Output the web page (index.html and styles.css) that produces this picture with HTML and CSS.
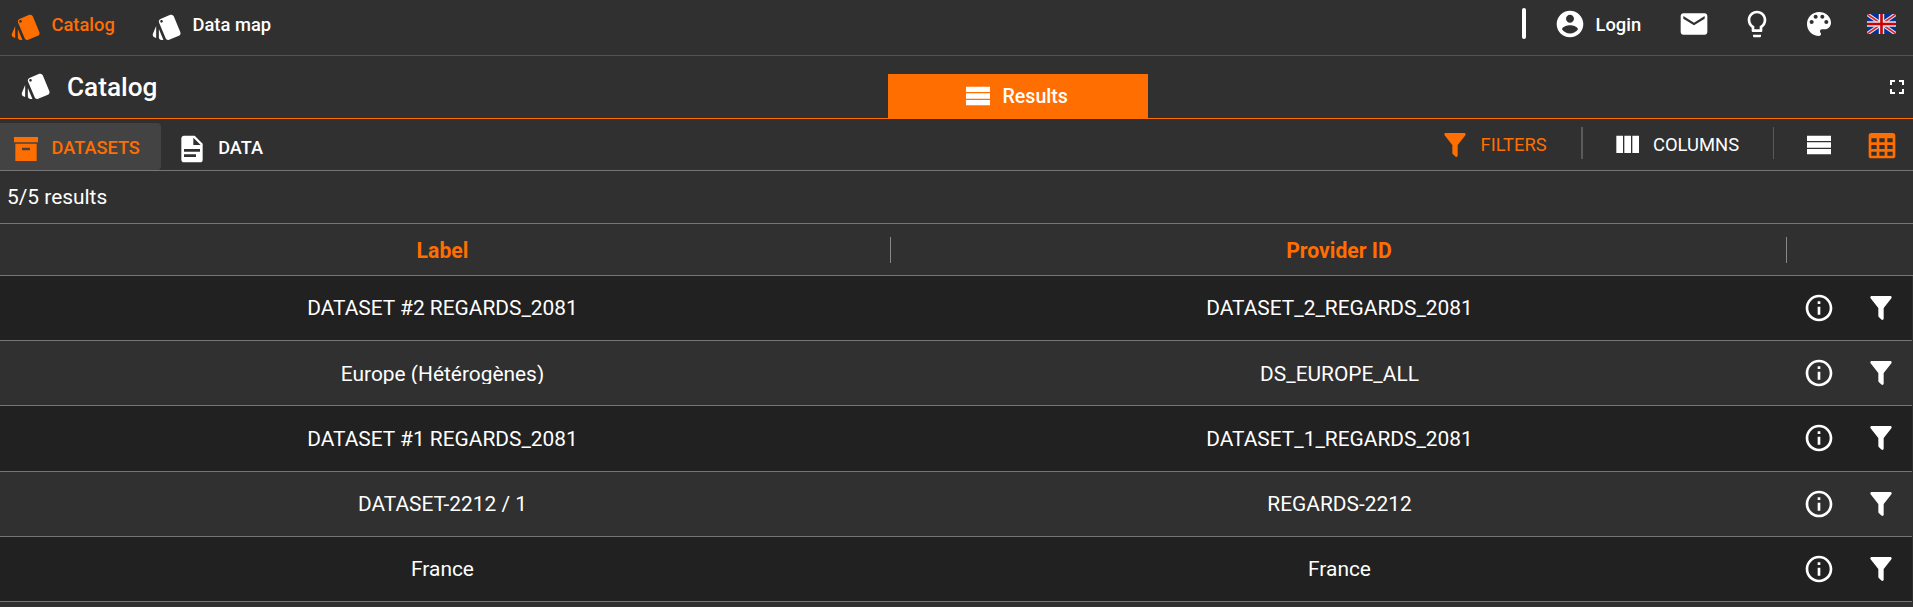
FILE: index.html
```html
<!DOCTYPE html>
<html lang="en">
<head>
<meta charset="utf-8">
<title>Catalog</title>
<link rel="stylesheet" href="styles.css">
</head>
<body>
<svg class="defs" width="0" height="0">
  <symbol id="cards" viewBox="0 0 24 24"><path d="M2.53 19.65l1.34.56v-9.03l-2.43 5.86c-.41 1.02.08 2.19 1.09 2.61zm19.5-3.7L17.07 3.98c-.31-.75-1.04-1.21-1.81-1.23-.26 0-.53.04-.79.15L7.1 5.95c-.75.31-1.21 1.03-1.23 1.8-.01.27.04.54.15.8l4.96 11.97c.31.76 1.05 1.22 1.83 1.23.26 0 .52-.05.77-.15l7.36-3.05c1.02-.42 1.51-1.59 1.09-2.6zM7.88 8.75c-.55 0-1-.45-1-1s.45-1 1-1 1 .45 1 1-.45 1-1 1zm-2 11c0 1.1.9 2 2 2h1.45l-3.45-8.34v6.34z"/></symbol>
  <symbol id="filter" viewBox="0 0 24 24"><path d="M14,12V19.88C14.04,20.18 13.94,20.5 13.71,20.71C13.32,21.1 12.69,21.1 12.3,20.71L10.29,18.7C10.06,18.47 9.96,18.16 10,17.87V12H9.97L4.21,4.62C3.87,4.19 3.95,3.56 4.38,3.22C4.57,3.08 4.78,3 5,3H19C19.22,3 19.43,3.08 19.62,3.22C20.05,3.56 20.13,4.19 19.79,4.62L14.03,12H14Z"/></symbol>
  <symbol id="info" viewBox="0 0 24 24"><path d="M11 17h2v-6h-2v6zm1-15C6.48 2 2 6.48 2 12s4.48 10 10 10 10-4.48 10-10S17.52 2 12 2zm0 18c-4.41 0-8-3.59-8-8s3.59-8 8-8 8 3.59 8 8-3.59 8-8 8zM11 9h2V7h-2v2z"/></symbol>
  <symbol id="rows" viewBox="0 0 24 24"><path d="M3 5h18v4H3zM3 10h18v4H3zM3 15h18v4H3z"/></symbol>
</svg>

<header class="topbar">
  <nav class="nav">
    <a class="nav-item active"><svg class="icon"><use href="#cards"/></svg><span>Catalog</span></a>
    <a class="nav-item"><svg class="icon"><use href="#cards"/></svg><span>Data map</span></a>
  </nav>
  <div class="tools">
    <i class="divider"></i>
    <a class="login"><svg class="icon" viewBox="0 0 24 24"><path d="M12 2C6.48 2 2 6.48 2 12s4.48 10 10 10 10-4.48 10-10S17.52 2 12 2zm0 3c1.66 0 3 1.34 3 3s-1.34 3-3 3-3-1.34-3-3 1.34-3 3-3zm0 14.2c-2.5 0-4.71-1.28-6-3.22.03-1.99 4-3.08 6-3.08 1.99 0 5.97 1.09 6 3.08-1.29 1.94-3.5 3.22-6 3.22z"/></svg><span>Login</span></a>
    <svg class="icon mail" viewBox="0 0 24 24"><path d="M20 4H4c-1.1 0-1.99.9-1.99 2L2 18c0 1.1.9 2 2 2h16c1.1 0 2-.9 2-2V6c0-1.1-.9-2-2-2zm0 4l-8 5-8-5V6l8 5 8-5v2z"/></svg>
    <svg class="icon bulb" viewBox="0 0 24 24"><path d="M9 21c0 .55.45 1 1 1h4c.55 0 1-.45 1-1v-1H9v1zm3-19C8.14 2 5 5.14 5 9c0 2.38 1.19 4.47 3 5.74V17c0 .55.45 1 1 1h6c.55 0 1-.45 1-1v-2.26c1.81-1.27 3-3.36 3-5.74 0-3.86-3.14-7-7-7zm2.85 11.1l-.85.6V16h-4v-2.3l-.85-.6C7.8 12.16 7 10.63 7 9c0-2.76 2.24-5 5-5s5 2.24 5 5c0 1.63-.8 3.16-2.15 4.1z"/></svg>
    <svg class="icon palette" viewBox="0 0 24 24"><path d="M12 3c-4.97 0-9 4.03-9 9s4.03 9 9 9c.83 0 1.5-.67 1.5-1.5 0-.39-.15-.74-.39-1.01-.23-.26-.38-.61-.38-.99 0-.83.67-1.5 1.5-1.5H16c2.76 0 5-2.24 5-5 0-4.42-4.03-8-9-8zm-5.5 9c-.83 0-1.5-.67-1.5-1.5S5.67 9 6.5 9 8 9.67 8 10.5 7.33 12 6.5 12zm3-4C8.67 8 8 7.33 8 6.5S8.67 5 9.5 5s1.5.67 1.5 1.5S10.33 8 9.5 8zm5 0c-.83 0-1.5-.67-1.5-1.5S13.67 5 14.5 5s1.5.67 1.5 1.5S15.33 8 14.5 8zm3 4c-.83 0-1.5-.67-1.5-1.5S16.67 9 17.500 9s1.5.67 1.5 1.5-.67 1.5-1.5 1.5z"/></svg>
    <svg class="flag" viewBox="0 0 29 20" preserveAspectRatio="none">
      <path fill="#039" d="M0 0h29v20H0z"/>
      <path stroke="#d8dcec" stroke-width="3.8" d="M0 0l29 20M29 0L0 20"/>
      <path stroke="#d22" stroke-width="1.5" d="M0 0l29 20M29 0L0 20"/>
      <path stroke="#e4e4ee" stroke-width="5.4" d="M14.500 0v20M0 10h29"/>
      <path stroke="#c00" stroke-width="2.6" d="M14.500 0v20M0 10h29"/>
    </svg>
  </div>
</header>

<section class="titlebar">
  <div class="title"><svg class="icon"><use href="#cards"/></svg><h1>Catalog</h1></div>
  <div class="results-tab"><svg class="icon"><use href="#rows"/></svg><span>Results</span></div>
  <svg class="fullscreen" viewBox="0 0 24 24"><path d="M7 14H5v5h5v-2H7v-3zm-2-4h2V7h3V5H5v5zm12 7h-3v2h5v-5h-2v3zM14 5v2h3v3h2V5h-5z"/></svg>
</section>

<section class="toolbar">
  <div class="tab selected"><svg class="icon" viewBox="0 0 24 24"><path d="M3,3H21V7H3V3M4,8H20V21H4V8M9.5,11A0.5,0.5 0 0,0 9,11.5V13H15V11.5A0.5,0.5 0 0,0 14.5,11H9.5Z"/></svg><span>DATASETS</span></div>
  <div class="tab"><svg class="icon" viewBox="0 0 24 24"><path d="M13,9H18.5L13,3.5V9M6,2H14L20,8V20A2,2 0 0,1 18,22H6C4.89,22 4,21.1 4,20V4C4,2.89 4.89,2 6,2M15,18V16H6V18H15M18,14V12H6V14H18Z"/></svg><span>DATA</span></div>
  <div class="options">
    <div class="option filters"><svg class="icon"><use href="#filter"/></svg><span>FILTERS</span></div>
    <div class="option columns"><svg class="icon" viewBox="0 0 24 24"><path d="M16,5V18H21V5M4,18H9V5H4M10,18H15V5H10V18Z"/></svg><span>COLUMNS</span></div>
    <div class="option views">
      <svg class="icon"><use href="#rows"/></svg>
      <svg class="icon grid" viewBox="0 0 24 24"><path d="M4,3H20A2,2 0 0,1 22,5V20A2,2 0 0,1 20,22H4A2,2 0 0,1 2,20V5A2,2 0 0,1 4,3M4,7V10H8V7H4M10,7V10H14V7H10M20,10V7H16V10H20M4,12V15H8V12H4M4,20H8V17H4V20M10,12V15H14V12H10M10,20H14V17H10V20M20,20V17H16V20H20M20,12H16V15H20V12Z"/></svg>
    </div>
  </div>
</section>

<div class="count">5/5 results</div>

<main class="table">
  <div class="row head"><div class="cell">Label</div><div class="cell">Provider ID</div><div class="actions"></div></div>
  <div class="row dark"><div class="cell">DATASET #2 REGARDS_2081</div><div class="cell">DATASET_2_REGARDS_2081</div><div class="actions"><svg class="icon"><use href="#info"/></svg><svg class="icon"><use href="#filter"/></svg></div></div>
  <div class="row low"><div class="cell">Europe (Hétérogènes)</div><div class="cell">DS_EUROPE_ALL</div><div class="actions"><svg class="icon"><use href="#info"/></svg><svg class="icon"><use href="#filter"/></svg></div></div>
  <div class="row dark mid"><div class="cell">DATASET #1 REGARDS_2081</div><div class="cell">DATASET_1_REGARDS_2081</div><div class="actions"><svg class="icon"><use href="#info"/></svg><svg class="icon"><use href="#filter"/></svg></div></div>
  <div class="row"><div class="cell">DATASET-2212 / 1</div><div class="cell">REGARDS-2212</div><div class="actions"><svg class="icon"><use href="#info"/></svg><svg class="icon"><use href="#filter"/></svg></div></div>
  <div class="row dark"><div class="cell">France</div><div class="cell">France</div><div class="actions"><svg class="icon"><use href="#info"/></svg><svg class="icon"><use href="#filter"/></svg></div></div>
</main>
</body>
</html>
```
FILE: styles.css
```css
* { box-sizing: border-box; }
html { height: 100%; overflow: hidden; }
body {
  margin: 0;
  height: 100%;
  overflow: hidden;
  background: #303030;
  color: #fff;
  font-family: Roboto, sans-serif;
  font-size: 20.900px;
}
.defs { display: block; }
.icon { display: block; width: 32px; height: 32px; fill: currentColor; flex: none; }

/* Application bar */
.topbar {
  display: flex;
  justify-content: space-between;
  height: 56px;
  border-bottom: 1px solid #535353;
  font-size: 18.350px;
  font-weight: 500;
}
.nav { display: flex; padding: 10.500px 0 0 10px; }
.nav-item { display: flex; gap: 9.500px; width: 141px; height: 32px; line-height: 27px; }
.nav-item.active { color: #ff6e00; }
.tools { display: flex; padding: 8px 17px 0 0; }
.divider { width: 4px; height: 31px; border-radius: 2px; background: #fff; margin-right: 27.500px; }
.login { display: flex; width: 124px; gap: 10px; line-height: 34px; }
.mail { margin-top: -0.500px; }
.bulb { margin: -0.500px 30.500px 0 31px; }
.flag { width: 29px; height: 20px; margin: 6px 0 0 32px; }

/* Page title and result tab */
.titlebar {
  display: flex;
  align-items: flex-end;
  height: 63px;
  border-bottom: 1px solid #ff6e00;
}
.title { display: flex; width: 888px; height: 44px; padding-left: 20px; gap: 15px; }
.title .icon { margin-top: -4.500px; }
h1 { margin: 0; font-size: 26.200px; font-weight: 500; line-height: 26px; }
.results-tab {
  display: flex;
  align-items: center;
  width: 260px;
  height: 44px;
  padding: 0 0 0 74px;
  gap: 8.500px;
  background: #ff6e00;
  font-size: 19.600px;
  font-weight: 500;
}
.results-tab .icon { margin-top: -1px; }
.results-tab span { margin-top: 1px; }
.fullscreen { width: 24px; height: 24px; fill: #fff; margin: 0 4px 19px auto; }

/* Dataset tabs and display options */
.toolbar { display: flex; height: 52px; border-bottom: 1px solid #757575; font-size: 18.200px; font-weight: 500; }
.tab { display: flex; height: 47px; margin-top: 4px; padding: 9.500px 0 0 14.700px; gap: 10.500px; line-height: 30px; }
.tab.selected { width: 161px; padding: 10px 0 0 10px; gap: 9.500px; line-height: 29px; color: #ff6e00; background: #434343; border-radius: 0 4px 4px 0; }
.options { display: flex; margin: 8px 0 0 auto; height: 32px; line-height: 36px; font-size: 18.400px; font-weight: 400; }
.option { display: flex; gap: 10px; }
.option .icon { margin-top: 1.500px; }
.filters { width: 144.300px; gap: 9.800px; color: #ff6e00; border-right: 2px solid #5a5a5a; }
.columns { width: 191px; padding-left: 28px; border-right: 1px solid #5a5a5a; }
.views { width: 139px; padding-left: 29px; gap: 30.500px; }
.option .grid { color: #ff6e00; }

.count { height: 53px; padding-left: 7px; border-bottom: 1px solid #757575; line-height: 53px; }

/* Results table */
.row { display: flex; width: 1912px; height: 65.200px; border-bottom: 1px solid #757575; }
.row.dark { background: #212121; }
.cell { width: 896px; padding: 0 0 0 1px; line-height: 65px; text-align: center; }
.cell:first-child { width: 891px; padding: 0 6px 0 0; }
.row.low .cell { height: 43px; line-height: 66px; overflow: hidden; }
.row.mid .cell { line-height: 66px; }
.actions { display: flex; padding: 16px 0 0 15.500px; gap: 30px; }
.head { width: 100%; height: 52px; color: #ff6e00; font-size: 21.200px; font-weight: 700; }
.head .cell { height: 26px; margin-top: 13px; line-height: 28px; border-right: 1px solid #888; }
.head .cell:first-child { padding-right: 5px; }
```
